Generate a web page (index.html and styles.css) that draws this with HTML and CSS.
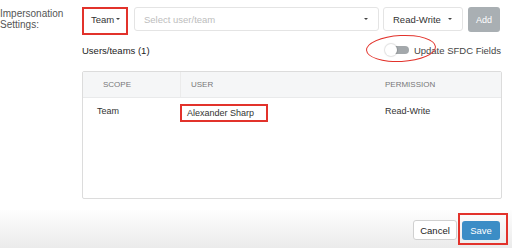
FILE: index.html
```html
<!DOCTYPE html>
<html lang="en">
<head>
    <meta charset="UTF-8">
    <meta name="viewport" content="width=device-width, initial-scale=1.0">
    <title>Impersonation Settings</title>
    <link rel="stylesheet" href="styles.css">
</head>
<body>
    <div class="settings">
        <div class="settings-label">Impersonation Settings:</div>
        <div class="settings-body">
            <div class="controls">
                <div class="team-btn mark">Team<span class="caret"></span></div>
                <div class="select user-select">
                    <span class="placeholder">Select user/team</span>
                    <span class="caret"></span>
                </div>
                <div class="select perm-select">
                    <span>Read-Write</span>
                    <span class="caret"></span>
                </div>
                <div class="btn-add">Add</div>
            </div>

            <div class="list-bar">
                <div class="list-title">Users/teams (1)</div>
                <div class="sfdc">
                    <div class="toggle"><span class="knob"></span></div>
                    <span>Update SFDC Fields</span>
                    <div class="ring"></div>
                </div>
            </div>

            <div class="grid-table">
                <div class="grid-head">
                    <div class="th th-scope">SCOPE</div>
                    <div class="th th-user">USER</div>
                    <div class="th">PERMISSION</div>
                </div>
                <div class="grid-row">
                    <div class="td td-scope">Team</div>
                    <div class="td"><span class="user-name mark">Alexander Sharp</span></div>
                    <div class="td">Read-Write</div>
                </div>
            </div>
        </div>
    </div>

    <div class="footer">
        <div class="btn btn-cancel">Cancel</div>
        <div class="save-wrap mark">
            <div class="btn btn-save">Save</div>
        </div>
    </div>
</body>
</html>
```

FILE: styles.css
```css
body {
    margin: 0;
    font-family: "Liberation Sans", Arial, sans-serif;
    color: #333;
    background: #fff;
    width: 512px;
    height: 248px;
    overflow: hidden;
}
.settings {
    display: grid;
    grid-template-columns: 82px 420px;
    height: 210px;
}
.settings-label {
    font-size: 10px;
    line-height: 11px;
    color: #555;
    padding-top: 8px;
}
.settings-body {
    padding-top: 7px;
}
.mark {
    border: 2px solid #e2322b;
    box-sizing: border-box;
}
.controls {
    display: flex;
    align-items: flex-start;
}
.team-btn {
    width: 46px;
    height: 28px;
    display: flex;
    align-items: center;
    padding: 0 0 4px 7px;
    font-size: 9.5px;
    color: #333;
}
.caret {
    display: inline-block;
    width: 0;
    height: 0;
    border-left: 2.5px solid transparent;
    border-right: 2.5px solid transparent;
    border-top: 2.5px solid #444;
    margin-left: 2px;
}
.select {
    height: 24px;
    box-sizing: border-box;
    border: 1px solid #e4e4e4;
    border-radius: 3px;
    display: flex;
    align-items: center;
    justify-content: space-between;
    padding: 0 10px 0 9px;
    font-size: 9.5px;
}
.user-select {
    width: 245px;
    margin-left: 6px;
}
.placeholder {
    color: #bdbdbd;
}
.perm-select {
    width: 80px;
    margin-left: 4px;
}
.btn-add {
    width: 32px;
    height: 25px;
    margin-left: 5px;
    border-radius: 3px;
    background: #a9afb3;
    color: #fff;
    font-size: 9px;
    display: flex;
    align-items: center;
    justify-content: center;
}
.list-bar {
    display: flex;
    justify-content: space-between;
    align-items: center;
    margin-top: 8px;
    height: 14px;
    padding-right: 1px;
    font-size: 9.5px;
}
.list-title {
    color: #222;
}
.sfdc {
    position: relative;
    display: flex;
    align-items: center;
    gap: 5px;
    color: #444;
}
.toggle {
    position: relative;
    width: 19px;
    height: 8px;
    margin-left: 5px;
    border-radius: 4px;
    background: #a3a8ab;
}
.knob {
    position: absolute;
    left: -5px;
    top: -2px;
    width: 12px;
    height: 12px;
    border-radius: 50%;
    background: #fff;
    box-shadow: 0 0 1px 1px rgba(0, 0, 0, 0.12);
}
.ring {
    position: absolute;
    left: -19px;
    top: -10px;
    width: 70px;
    height: 27px;
    border: 1.5px solid #e2322b;
    border-radius: 50%;
    box-sizing: border-box;
    transform: rotate(-3deg);
}
.grid-table {
    margin-top: 14px;
    height: 128px;
    box-sizing: border-box;
    border: 1px solid #dcdcdc;
    border-radius: 2px;
}
.grid-head, .grid-row {
    display: grid;
    grid-template-columns: 97px 195px 1fr;
}
.grid-head {
    height: 25px;
    background: #f5f6f7;
    border-bottom: 1px solid #e9eaeb;
    align-items: center;
}
.th {
    font-size: 8px;
    color: #777;
    padding-left: 10px;
    line-height: 25px;
}
.th-scope {
    padding-left: 20px;
}
.th-user {
    border-left: 1px solid #ebebeb;
}
.grid-row {
    height: 26px;
    align-items: center;
    font-size: 9px;
}
.td {
    padding-left: 10px;
    color: #333;
}
.td-scope {
    padding-left: 14px;
}
.grid-row .td:nth-child(2) {
    padding-left: 0;
}
.user-name {
    display: inline-flex;
    align-items: center;
    width: 88px;
    height: 18px;
    margin-top: 4px;
    padding-left: 5px;
}
.footer {
    height: 38px;
    background: linear-gradient(#fefefe, #ebebeb);
    display: flex;
    justify-content: flex-end;
    align-items: flex-start;
    padding-right: 4px;
}
.btn {
    height: 20px;
    box-sizing: border-box;
    border-radius: 3px;
    font-size: 9.5px;
    display: flex;
    align-items: center;
    justify-content: center;
}
.btn-cancel {
    width: 44px;
    margin-top: 10px;
    margin-right: 1px;
    background: #fff;
    border: 1px solid #d0d0d0;
    color: #222;
}
.save-wrap {
    width: 50px;
    height: 32px;
    margin-top: 3px;
    padding: 6px 6px 2px 2px;
}
.btn-save {
    width: 38px;
    height: 19px;
    background: #3b8dc6;
    color: #fff;
}
```
